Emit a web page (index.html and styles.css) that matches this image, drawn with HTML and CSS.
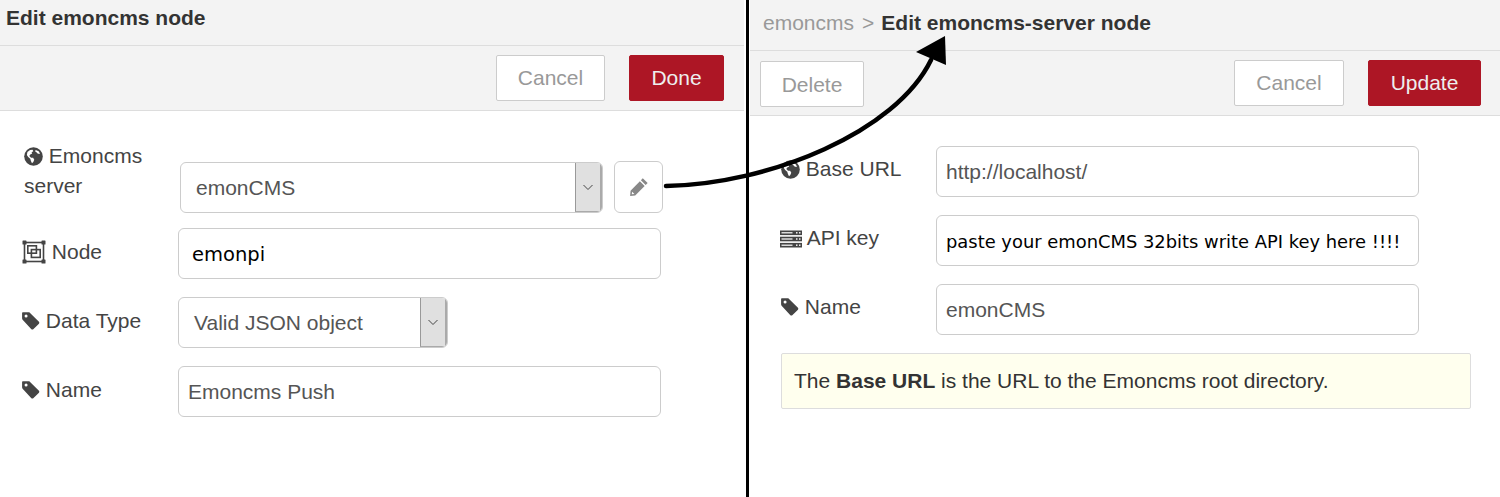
FILE: index.html
```html
<!DOCTYPE html>
<html lang="en">
<head>
<meta charset="utf-8">
<title>Edit emoncms node</title>
<link rel="stylesheet" href="styles.css">
</head>
<body>
<svg width="0" height="0" class="defs">
  <symbol id="i-globe" viewBox="0 0 20 20">
    <circle cx="10" cy="10" r="9.800" fill="#444"/>
    <path fill="#fff" d="M3.600 5.200 6.400 3.200 9 2.800 9.800 4.400 8 5.400 8.600 6.800 6.600 7.800 5.600 9.400 7.400 11.200 9.600 11.400 10.800 13.400 9.800 15.800 8.400 17 7.200 14.600 6.600 12.400 4.400 10.600 3 8.400Z"/>
    <path fill="#fff" d="M12.200 3.200 15.400 4.600 17 7 14.600 7.200 13.400 5.800 11.800 4.800Z"/>
  </symbol>
  <symbol id="i-tag" viewBox="0.500 1 19 19">
    <path fill="#444" fill-rule="evenodd" d="M1.400 1.200H8.200L18.400 11.400Q19.200 12.400 18.400 13.400L12.400 19.200Q11.400 20 10.400 19.200L1.400 9.400Q.6 8.600.6 7.600V2Q.6 1.200 1.400 1.200ZM4.800 3.600A1.600 1.600 0 1 0 4.800 6.800 1.600 1.600 0 1 0 4.800 3.600Z"/>
  </symbol>
  <symbol id="i-node" viewBox="0 0 24 24">
    <g fill="none" stroke="#444" stroke-width="1.600">
      <rect x="2.500" y="2.500" width="19" height="19"/>
      <rect x="5.800" y="5.800" width="8.600" height="7.400"/>
      <rect x="9.400" y="9.600" width="8.800" height="7.800"/>
    </g>
    <g fill="#444">
      <rect x="0.500" y="0.500" width="4" height="4" rx=".6"/><rect x="19.500" y="0.500" width="4" height="4" rx=".6"/>
      <rect x="0.500" y="19.500" width="4" height="4" rx=".6"/><rect x="19.500" y="19.500" width="4" height="4" rx=".6"/>
    </g>
  </symbol>
  <symbol id="i-server" viewBox="0 0 22 18">
    <g fill="#444">
      <rect y="0.500" width="22" height="4.600"/><rect y="6.700" width="22" height="4.600"/><rect y="12.900" width="22" height="4.600"/>
    </g>
    <g fill="#fff">
      <rect x="1.500" y="2.200" width="11" height="1.200"/><rect x="1.500" y="8.400" width="11" height="1.200"/><rect x="1.500" y="14.600" width="11" height="1.200"/>
      <rect x="16" y="2.100" width="1.500" height="1.400"/><rect x="19" y="2.100" width="1.500" height="1.400"/>
      <rect x="16" y="8.300" width="1.500" height="1.400"/><rect x="19" y="8.300" width="1.500" height="1.400"/>
      <rect x="16" y="14.500" width="1.500" height="1.400"/><rect x="19" y="14.500" width="1.500" height="1.400"/>
    </g>
  </symbol>
</svg>

<main class="app">
  <section class="panel panel-left">
    <header class="title title-left"><span class="title-strong">Edit emoncms node</span></header>
    <div class="toolbar toolbar-left">
      <button class="btn btn-cancel-left">Cancel</button>
      <button class="btn btn-primary btn-done">Done</button>
    </div>
    <form class="form form-left">
      <div class="row row-server">
        <div class="label label-wrap"><svg class="ic ic-globe"><use href="#i-globe"/></svg> Emoncms<br>server</div>
        <div class="field select select-server"><span class="select-text">emonCMS</span><span class="select-arrow"><svg width="12" height="7" viewBox="0 0 12 7"><path d="M1.500 1l4.500 4.500L10.500 1" fill="none" stroke="#444" stroke-width="1"/></svg></span></div>
        <button type="button" class="edit-btn" aria-label="Edit">
          <svg width="20" height="20" viewBox="0 0 18 18"><path fill="#888" d="M12.400 1.200 16.800 5.400 15 7.200 10.700 2.900ZM9.800 3.800 14.100 8.100 5.600 16.600 1 17.200 1.400 12.400ZM2.800 13.300 2.500 15.600 4.900 15.300Z"/></svg>
        </button>
      </div>
      <div class="row row-node">
        <div class="label"><svg class="ic ic-node"><use href="#i-node"/></svg> Node</div>
        <div class="field input mono wide">emonpi</div>
      </div>
      <div class="row row-type">
        <div class="label"><svg class="ic ic-tag"><use href="#i-tag"/></svg> Data Type</div>
        <div class="field select select-type"><span class="select-text">Valid JSON object</span><span class="select-arrow"><svg width="12" height="7" viewBox="0 0 12 7"><path d="M1.500 1l4.500 4.500L10.500 1" fill="none" stroke="#444" stroke-width="1"/></svg></span></div>
      </div>
      <div class="row row-name">
        <div class="label"><svg class="ic ic-tag"><use href="#i-tag"/></svg> Name</div>
        <div class="field input wide">Emoncms Push</div>
      </div>
    </form>
  </section>

  <div class="divider"></div>

  <section class="panel panel-right">
    <header class="title title-right"><span class="crumb">emoncms</span><span class="crumb crumb-sep">&gt;</span><span class="title-strong">Edit emoncms-server node</span></header>
    <div class="toolbar toolbar-right">
      <button class="btn btn-delete">Delete</button>
      <div class="spacer"></div>
      <button class="btn btn-cancel-right">Cancel</button>
      <button class="btn btn-primary btn-update">Update</button>
    </div>
    <form class="form form-right">
      <div class="rrow">
        <div class="label"><svg class="ic ic-globe"><use href="#i-globe"/></svg> Base URL</div>
        <div class="field input rwide">http://localhost/</div>
      </div>
      <div class="rrow">
        <div class="label"><svg class="ic ic-server"><use href="#i-server"/></svg> API key</div>
        <div class="field input rwide mono mono-small">paste your emonCMS 32bits write API key here !!!!</div>
      </div>
      <div class="rrow">
        <div class="label"><svg class="ic ic-tag"><use href="#i-tag"/></svg> Name</div>
        <div class="field input rwide">emonCMS</div>
      </div>
      <div class="tip">The <strong>Base URL</strong> is the URL to the Emoncms root directory.</div>
    </form>
  </section>
</main>

<svg class="arrow" width="1500" height="497" viewBox="0 0 1500 497" aria-hidden="true">
  <path d="M666 186C770 184 896 132 931 60" fill="none" stroke="#000" stroke-width="4.500" stroke-linecap="round"/>
  <path d="M945 36 916 52 946 65Z" fill="#000"/>
</svg>
</body>
</html>
```
FILE: styles.css
```css
* { box-sizing: border-box; }
html, body { margin: 0; padding: 0; background: #fff; }
body {
  width: 1500px;
  height: 497px;
  overflow: hidden;
  position: relative;
  font-family: "Liberation Sans", Arial, sans-serif;
  font-size: 21px;
  color: #444;
}
.defs { position: absolute; }
.app { display: flex; height: 497px; }
.panel-left { width: 744px; flex: none; }
.divider { width: 2.5px; background: #000; margin-left: 2px; flex: none; }
.panel-right { width: 750px; margin-left: 1.5px; flex: none; }

.title { background: #f3f3f3; border-bottom: 1px solid #ddd; display: flex; align-items: center; font-size: 21px; }
.title-left { height: 46px; padding: 0 0 9px 6px; }
.title-right { height: 51px; padding: 0 0 4px 13px; }
.title-strong { font-weight: 700; color: #333; }
.crumb { color: #999; }
.crumb-sep { margin: 0 7px 0 8px; }

.toolbar { display: flex; background: #f3f3f3; border-bottom: 1px solid #ddd; height: 65px; }
.toolbar-left { justify-content: flex-end; padding: 9px 20px 0 0; gap: 24px; }
.toolbar-right { padding: 9px 19px 0 10px; }
.spacer { flex: 1; }

.btn {
  height: 46px;
  font: 21px "Liberation Sans", Arial, sans-serif;
  border: 1px solid #ccc;
  background: #fff;
  color: #999;
  border-radius: 2px;
  padding: 0;
}
.btn-primary { background: #ad1625; border-color: #ad1625; color: #eee; }
.btn-cancel-left { width: 109px; }
.btn-done { width: 95px; }
.btn-delete { width: 104px; margin-top: 1px; padding-top: 2px; }
.btn-cancel-right { width: 110px; margin-right: 24px; }
.btn-update { width: 113px; }

.label { color: #444; line-height: 30px; }
.ic { display: inline-block; vertical-align: -3px; }
.ic-globe { width: 19px; height: 19px; }
.ic-tag { width: 18px; height: 18px; vertical-align: -2px; }
.ic-node { width: 24px; height: 24px; vertical-align: -5px; }
.ic-server { width: 22px; height: 18px; margin-left: -1px; }

.field { height: 51px; border: 1px solid #ccc; border-radius: 6px; background: #fff; display: flex; align-items: center; color: #555; padding-top: 1px; }
.input { padding-left: 9px; }
.mono { font-family: "DejaVu Sans", Verdana, sans-serif; color: #000; font-size: 19.500px; padding-left: 13px; }
.mono-small { font-size: 17.900px; padding-left: 9px; }
.wide { width: 483px; }
.rwide { width: 483px; }

.select { position: relative; overflow: hidden; padding-left: 15px; padding-top: 0; justify-content: space-between; }
.select-text { padding-top: 1px; }
.select-arrow {
  width: 27px;
  align-self: stretch;
  background: #e0e0e0;
  border-left: 1px solid #999;
  border-right: 2px solid #aaa;
  border-bottom: 1px solid #aaa;
  display: flex;
  align-items: center;
  justify-content: center;
  flex: none;
}
.select-server { width: 423px; }
.select-type { width: 270px; }

.form-left { display: flex; flex-direction: column; padding: 0 0 0 22px; }
.row { display: flex; }
.row .label { width: 156px; flex: none; }
.row-server { padding-top: 30px; height: 117px; }
.row-server .label { width: 158px; padding-left: 2px; }
.select-server { margin-top: 21px; }
.edit-btn {
  width: 49px; height: 52px;
  margin: 20px 0 0 11px;
  border: 1px solid #ccc;
  border-radius: 6px;
  background: #fff;
  padding: 0;
  display: flex; align-items: center; justify-content: center;
}
.row-node, .row-type, .row-name { height: 69px; }
.row-node .label, .row-type .label, .row-name .label { padding-top: 9px; }

.form-right { display: flex; flex-direction: column; padding: 30px 0 0 31px; }
.rrow { display: flex; height: 69px; }
.rrow .label { width: 155px; flex: none; padding-top: 8px; }
.tip {
  width: 690px;
  height: 56px;
  background: #ffffee;
  border: 1px solid #ddd;
  border-radius: 2px;
  display: flex;
  align-items: center;
  white-space: pre;
  padding-left: 12px;
  color: #333;
}

.arrow { position: absolute; left: 0; top: 0; pointer-events: none; }
```
